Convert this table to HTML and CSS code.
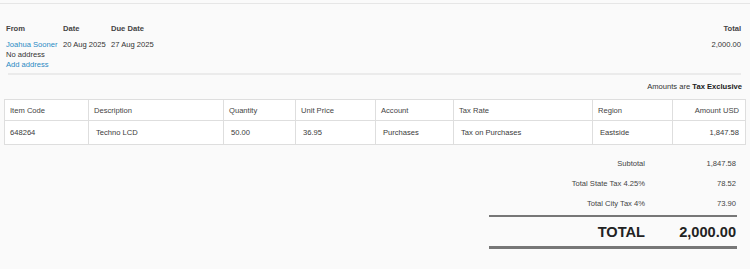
FILE: index.html
```html
<!DOCTYPE html>
<html>
<head>
<meta charset="utf-8">
<link rel="stylesheet" href="styles.css">
</head>
<body>
<div class="page">
  <section class="summary">
    <div class="field from">
      <div class="label">From</div>
      <div class="value link">Joahua Sooner</div>
      <div class="value">No address</div>
      <div class="value link">Add address</div>
    </div>
    <div class="field date">
      <div class="label">Date</div>
      <div class="value">20 Aug 2025</div>
    </div>
    <div class="field due">
      <div class="label">Due Date</div>
      <div class="value">27 Aug 2025</div>
    </div>
    <div class="field total">
      <div class="label">Total</div>
      <div class="value">2,000.00</div>
    </div>
  </section>
  <hr class="sep">
  <div class="amounts">Amounts are <b>Tax Exclusive</b></div>
  <table class="items">
    <colgroup>
      <col class="c1"><col class="c2"><col class="c3"><col class="c4"><col class="c5"><col class="c6"><col class="c7"><col class="c8">
    </colgroup>
    <thead>
      <tr>
        <th>Item Code</th><th>Description</th><th>Quantity</th><th>Unit Price</th><th>Account</th><th>Tax Rate</th><th>Region</th><th class="num">Amount USD</th>
      </tr>
    </thead>
    <tbody>
      <tr>
        <td>648264</td><td class="ind">Techno LCD</td><td class="ind">50.00</td><td class="ind">36.95</td><td class="ind">Purchases</td><td class="ind">Tax on Purchases</td><td class="ind">Eastside</td><td class="num">1,847.58</td>
      </tr>
    </tbody>
  </table>
  <section class="totals">
    <div class="trow"><span class="tl">Subtotal</span><span class="tv">1,847.58</span></div>
    <div class="trow"><span class="tl">Total State Tax 4.25%</span><span class="tv">78.52</span></div>
    <div class="trow"><span class="tl">Total City Tax 4%</span><span class="tv">73.90</span></div>
    <div class="grand"><span class="tl">TOTAL</span><span class="tv">2,000.00</span></div>
  </section>
</div>
</body>
</html>
```
FILE: styles.css
```css
html, body {
  margin: 0;
  padding: 0;
}
body {
  background: #fafafa;
  font-family: "Liberation Sans", Arial, sans-serif;
  font-size: 7.6px;
  color: #333;
}
.page {
  padding-top: 3px;
}
.summary {
  border-top: 1px solid #e6e6e6;
  padding: 20px 9px 3px 6px;
  display: flex;
}
.field .label {
  font-weight: bold;
  color: #444;
  line-height: 10px;
  height: 10px;
  margin-bottom: 6px;
}
.field .value {
  line-height: 10px;
  color: #333;
}
.field .link {
  color: #2a8ac4;
}
.from { width: 57px; }
.date { width: 48px; }
.due { flex: 1; }
.total { text-align: right; }

.sep {
  margin: 0 9px 0 8px;
  border: 0;
  border-top: 2px solid #ebebeb;
  height: 0;
}

.amounts {
  text-align: right;
  line-height: 10px;
  margin: 7px 8px 0 0;
  color: #333;
}
.amounts b { color: #222; }

.items {
  margin: 7px 0 0 4px;
  width: 741px;
  border-collapse: collapse;
  table-layout: fixed;
  background: #fff;
}
.items th, .items td {
  border: 1px solid #dedede;
  padding: 0 5px;
  text-align: left;
  font-weight: normal;
  white-space: nowrap;
}
.items th {
  height: 20px;
  color: #444;
}
.items td {
  height: 23px;
  color: #3a3a3a;
}
.items td.ind { padding-left: 7px; }
.items .num { text-align: right; padding-right: 6px; }
.c1 { width: 84px; }
.c2 { width: 135px; }
.c3 { width: 72px; }
.c4 { width: 80px; }
.c5 { width: 78px; }
.c6 { width: 139px; }
.c7 { width: 80px; }
.c8 { width: 73px; }

.totals {
  width: 248px;
  margin: 8px 0 0 489px;
}
.trow {
  display: flex;
  height: 20px;
  align-items: center;
  color: #444;
}
.tl {
  width: 156px;
  text-align: right;
}
.tv {
  flex: 1;
  text-align: right;
  padding-right: 1px;
}
.grand {
  display: flex;
  align-items: center;
  margin-top: 2px;
  height: 29px;
  border-top: 2px solid #777;
  border-bottom: 3px solid #777;
  font-weight: bold;
  font-size: 14.6px;
  color: #222;
}
```
